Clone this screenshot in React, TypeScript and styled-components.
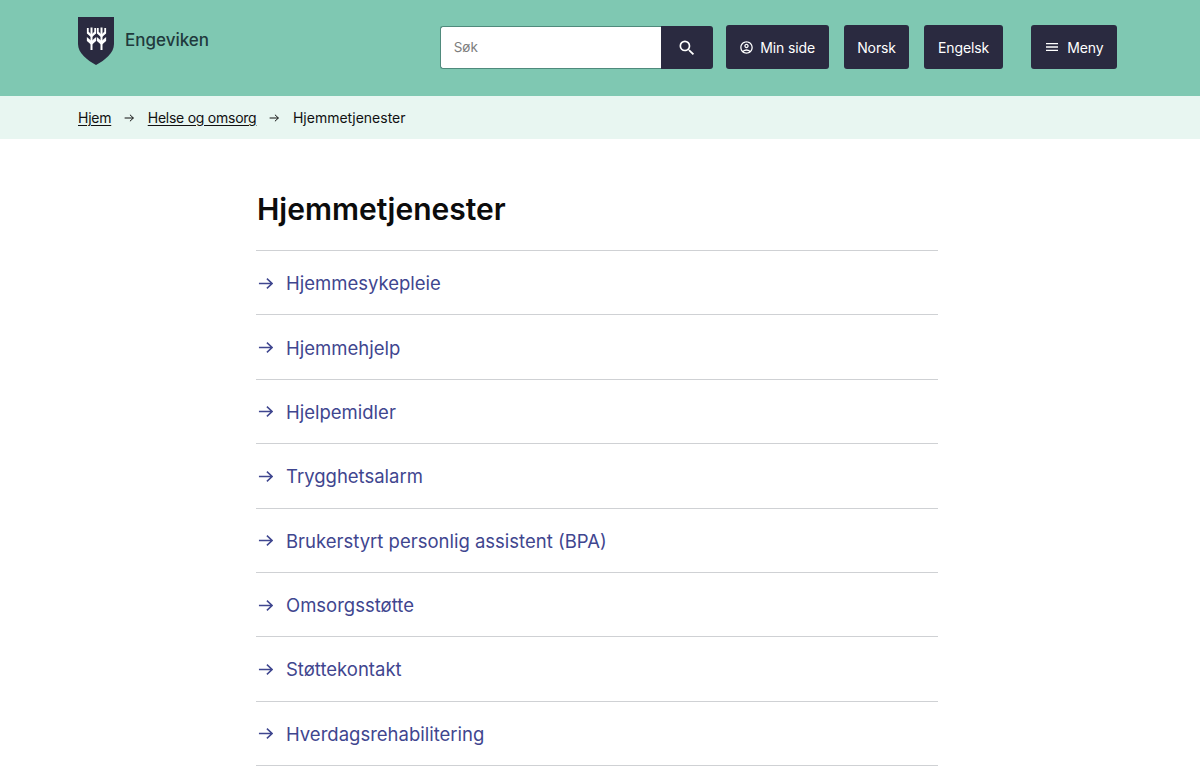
import styled, { createGlobalStyle } from 'styled-components';
import { MdMenu, MdOutlineAccountCircle, MdSearch } from 'react-icons/md';

const GlobalStyle = createGlobalStyle`
  html, body {
    margin: 0;
    padding: 0;
    background: #fff;
    font-family: 'Inter', 'Liberation Sans', sans-serif;
  }
`;

const Page = styled.div`
  width: 1200px;
  height: 772px;
  overflow: hidden;
`;

const Header = styled.header`
  height: 96px;
  box-sizing: border-box;
  background: #7fc8b2;
  padding: 0 83px 0 78px;
  display: flex;
  justify-content: space-between;
`;

const Brand = styled.a`
  display: flex;
  align-items: flex-start;
  gap: 11px;
  padding-top: 17px;
  color: #1f3a3d;
  font-size: 17px;
  font-weight: 500;
  line-height: 46px;
`;

const Actions = styled.div`
  display: flex;
  align-items: flex-start;
  padding-top: 25px;
`;

const SearchBox = styled.form`
  display: flex;
  height: 43px;
  margin-top: 1px;
  margin-right: 13px;
`;

const SearchInput = styled.div`
  width: 221px;
  box-sizing: border-box;
  background: #fff;
  border: 1px solid #4f8a7c;
  border-right: 0;
  border-radius: 3px 0 0 3px;
  padding-left: 13px;
  color: #7d7d7d;
  font-size: 13.5px;
  line-height: 41px;
`;

const SearchButton = styled.button`
  width: 52px;
  border: 0;
  padding: 0;
  border-radius: 0 3px 3px 0;
  background: #2a2a40;
  color: #fff;
  display: flex;
  align-items: center;
  justify-content: center;
`;

const NavButton = styled.button<{ $gap?: number; $iconGap?: number }>`
  height: 44px;
  border: 0;
  border-radius: 3px;
  padding: 0 13.5px;
  margin-right: ${(props) => props.$gap ?? 15}px;
  background: #2a2a40;
  color: #fff;
  font-family: inherit;
  font-size: 14px;
  letter-spacing: -0.1px;
  font-weight: 400;
  display: flex;
  align-items: center;
  gap: ${(props) => props.$iconGap ?? 6}px;

  &:last-child {
    margin-right: 0;
  }
`;

const Breadcrumbs = styled.nav`
  height: 43px;
  box-sizing: border-box;
  background: #e8f6f1;
  padding-left: 78px;
  display: flex;
  align-items: center;
  font-size: 14px;
  color: #111;
`;

const Crumb = styled.a`
  color: #111;
  letter-spacing: -0.25px;
  text-decoration: underline;
  text-underline-offset: 2px;
`;

const CrumbArrow = styled.span`
  display: flex;
  margin: 0 14px 0 12.5px;
`;

const Main = styled.main`
  width: 682px;
  margin-left: 256px;
`;

const Title = styled.h1`
  margin: 0;
  padding: 51px 0 22px 1px;
  font-size: 30px;
  line-height: 38px;
  font-weight: 600;
  color: #0c0c0c;
  border-bottom: 1px solid #cfd1d4;
`;

const LinkList = styled.ul`
  list-style: none;
  margin: 0;
  padding: 0;
`;

const LinkRow = styled.li`
  height: 64.375px;
  box-sizing: border-box;
  border-bottom: 1px solid #cfd1d4;
  display: flex;
  align-items: center;
  gap: 13px;
  padding: 1px 0 0 2px;
  color: #3f468f;
  font-size: 18.5px;
`;

const links = [
  'Hjemmesykepleie',
  'Hjemmehjelp',
  'Hjelpemidler',
  'Trygghetsalarm',
  'Brukerstyrt personlig assistent (BPA)',
  'Omsorgsstøtte',
  'Støttekontakt',
  'Hverdagsrehabilitering',
];

function Arrow({ width }: { width: number }) {
  return (
    <svg width={width} height={width} viewBox="0 0 16 16" fill="none" stroke="currentColor" strokeWidth="1.6">
      <path d="M1 8H15M9.5 2.8L15 8L9.5 13.2" />
    </svg>
  );
}

function Wheat({ x }: { x: number }) {
  return (
    <g transform={`translate(${x} 0)`}>
      <path d="M-1 10.5H1V33H-1Z" />
      <path d="M-4.6 11H-2.8V14.8L0 17.5V20.5L-4.6 16.5Z" />
      <path d="M4.6 11H2.8V14.8L0 17.5V20.5L4.6 16.5Z" />
      <path d="M-4.6 20L0 24V28L-4.6 24Z" />
      <path d="M4.6 20L0 24V28L4.6 24Z" />
    </g>
  );
}

function Logo() {
  return (
    <svg width="36" height="48" viewBox="0 0 36 48" fill="#fff">
      <path d="M0 0H36V27C36 36 27 43 18 48C9 43 0 36 0 27Z" fill="#2a2a40" />
      <Wheat x={13.5} />
      <Wheat x={23.5} />
    </svg>
  );
}

export default function App() {
  return (
    <Page>
      <GlobalStyle />
      <Header>
        <Brand>
          <Logo />
          <span>Engeviken</span>
        </Brand>
        <Actions>
          <SearchBox>
            <SearchInput>Søk</SearchInput>
            <SearchButton type="button">
              <MdSearch size={20} />
            </SearchButton>
          </SearchBox>
          <NavButton>
            <MdOutlineAccountCircle size={15} />
            Min side
          </NavButton>
          <NavButton>Norsk</NavButton>
          <NavButton $gap={28}>Engelsk</NavButton>
          <NavButton $iconGap={7}>
            <MdMenu size={16} />
            Meny
          </NavButton>
        </Actions>
      </Header>
      <Breadcrumbs>
        <Crumb>Hjem</Crumb>
        <CrumbArrow>
          <Arrow width={10} />
        </CrumbArrow>
        <Crumb>Helse og omsorg</Crumb>
        <CrumbArrow>
          <Arrow width={10} />
        </CrumbArrow>
        <span>Hjemmetjenester</span>
      </Breadcrumbs>
      <Main>
        <Title>Hjemmetjenester</Title>
        <LinkList>
          {links.map((link) => (
            <LinkRow key={link}>
              <Arrow width={15} />
              {link}
            </LinkRow>
          ))}
        </LinkList>
      </Main>
    </Page>
  );
}
